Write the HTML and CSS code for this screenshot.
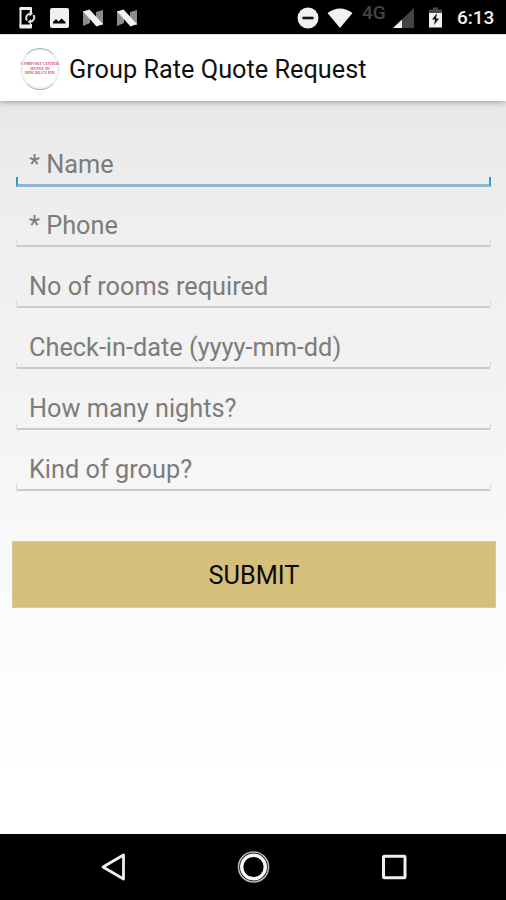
FILE: index.html
```html
<!DOCTYPE html>
<html lang="en">
<head>
<meta charset="UTF-8">
<meta name="viewport" content="width=device-width, initial-scale=1">
<title>Group Rate Quote Request</title>
<link rel="stylesheet" href="styles.css">
</head>
<body>

<div class="status">
	<div class="status_left">
		<!-- phone sync -->
		<svg width="18" height="24" viewBox="0 0 18 24">
			<path d="M13 7V3H2.500V20.500H13V18" fill="none" stroke="#f0f0f0" stroke-width="2" stroke-linejoin="round"/>
			<path d="M2.500 1H13Q14 1 14 2V4H1.500V2Q1.500 1 2.500 1ZM1.500 18.500H14V21.500Q14 22.500 13 22.500H2.500Q1.500 22.500 1.500 21.500Z" fill="#f0f0f0"/>
			<path d="M9 14.500A4.300 4.300 0 0 1 12 7.700M15.500 9A4.300 4.300 0 0 1 12.500 15.700" fill="none" stroke="#dcdcdc" stroke-width="2"/>
			<path d="M11.500 5V10.500L15 7.700ZM13 13V18.500L9.500 15.700Z" fill="#dcdcdc"/>
		</svg>
		<!-- picture -->
		<svg width="19" height="20" viewBox="0 0 19 20">
			<rect width="19" height="20" rx="2" fill="#f0f0f0"/>
			<path d="M3 15.500V14L6 11L8.500 13.500L11.500 10.500L15.500 14V15.500Z" fill="#000"/>
		</svg>
		<svg class="nougat" width="22" height="18" viewBox="0 0 22 18">
			<path d="M1 2H8V14L1 17ZM14 3L21 1V16H14Z" fill="#8c8c8c"/>
			<path d="M1 2.500L7.500 0.500L21 15L14.500 17.500Z" fill="#f2f2f2"/>
		</svg>
		<svg class="nougat" width="22" height="18" viewBox="0 0 22 18">
			<path d="M1 2H8V14L1 17ZM14 3L21 1V16H14Z" fill="#8c8c8c"/>
			<path d="M1 2.500L7.500 0.500L21 15L14.500 17.500Z" fill="#f2f2f2"/>
		</svg>
	</div>
	<div class="status_right">
		<svg width="22" height="22" viewBox="0 0 22 22">
			<circle cx="11" cy="11" r="10.500" fill="#f0f0f0"/>
			<rect x="5.500" y="9.700" width="11" height="2.600" fill="#111"/>
		</svg>
		<svg class="wifi" width="26" height="20" viewBox="0 0 26 20">
			<path d="M0.500 5Q13 -4 25.500 5L13 20Z" fill="#f2f2f2"/>
		</svg>
		<span class="net">4G</span>
		<svg class="signal" width="21" height="20" viewBox="0 0 21 20">
			<path d="M0 20L21 0V20Z" fill="#444"/>
			<path d="M0 20L9 11.500V20Z" fill="#f2f2f2"/>
		</svg>
		<svg class="battery" width="15" height="21" viewBox="0 0 15 21">
			<path d="M5 0.500H10V2.500H14V6H1V2.500H5Z" fill="#4a4a4a"/>
			<path d="M1 6H14V20.500H1Z" fill="#f0f0f0"/>
			<path d="M9 6L4 12.500H7L6 18L11 11.500H8Z" fill="#111"/>
		</svg>
		<span class="clock">6:13</span>
	</div>
</div>

<div class="title_bar">
	<div class="logo">
		<span>COMFORT CENTER</span>
		<span>HOTEL IN</span>
		<span>HINCKLEY INN</span>
	</div>
	<h1>Group Rate Quote Request</h1>
</div>

<form class="quote">
	<label class="field focus"><input type="text" placeholder="* Name"></label>
	<label class="field"><input type="text" placeholder="* Phone"></label>
	<label class="field"><input type="text" placeholder="No of rooms required"></label>
	<label class="field"><input type="text" placeholder="Check-in-date (yyyy-mm-dd)"></label>
	<label class="field"><input type="text" placeholder="How many nights?"></label>
	<label class="field"><input type="text" placeholder="Kind of group?"></label>
	<button type="button" class="submit">SUBMIT</button>
</form>

<div class="nav">
	<svg width="34" height="34" viewBox="0 0 34 34">
		<path d="M27.500 5V29L7 17Z" fill="none" stroke="#f0f0f0" stroke-width="2.800" stroke-linejoin="round"/>
	</svg>
	<svg width="34" height="34" viewBox="0 0 34 34">
		<circle cx="16.500" cy="17" r="15" fill="none" stroke="#b5b5b5" stroke-width="1.600"/>
		<circle cx="16.500" cy="17" r="11.800" fill="none" stroke="#f5f5f5" stroke-width="3.400"/>
	</svg>
	<svg width="34" height="34" viewBox="0 0 34 34">
		<rect x="6.500" y="6.300" width="21.500" height="21.500" rx="1" fill="none" stroke="#f0f0f0" stroke-width="3"/>
	</svg>
</div>

</body>
</html>
```
FILE: styles.css
```css
* {
	box-sizing: border-box;
	margin: 0;
	padding: 0;
}
body {
	display: flex;
	flex-direction: column;
	width: 506px;
	height: 900px;
	font-family: Roboto, sans-serif;
	background: #fff;
	overflow: hidden;
}
svg {
	display: block;
	flex: none;
}

/* status bar */
.status {
	display: flex;
	justify-content: space-between;
	height: 34px;
	padding: 0 10px 0 18px;
	background: #000;
}
.status_left,
.status_right {
	display: flex;
	align-items: center;
	height: 35px;
}
.status_left {
	gap: 13px;
}
.status_left svg:first-child {
	margin-right: 1px;
}
.status_left .nougat + .nougat {
	margin-left: -1px;
}
.wifi {
	margin-left: 8px;
}
.net {
	width: 26px;
	margin: -9px 0 0 9px;
	color: #444;
	font-size: 19px;
	font-weight: 500;
	line-height: 20px;
}
.signal {
	margin-left: 5px;
}
.battery {
	margin-left: 14px;
}
.clock {
	width: 39px;
	margin: 1px 0 0 14px;
	color: #f2f2f2;
	font-size: 19px;
	font-weight: 500;
	line-height: 20px;
	white-space: nowrap;
}

/* title */
.title_bar {
	display: flex;
	align-items: center;
	height: 67px;
	padding: 2px 0 0 20px;
	background: #fff;
	border-top: 1px solid #ddd;
	box-shadow: 0 1px 6px rgba(0, 0, 0, .35);
	z-index: 1;
}
.logo {
	display: flex;
	flex-direction: column;
	align-items: center;
	justify-content: center;
	width: 40px;
	height: 42px;
	border: 1px solid #b5b5b5;
	border-left-color: #eee;
	border-right-color: #eee;
	border-radius: 50%;
	box-shadow: inset 0 0 3px #ccc;
	color: #e0405c;
	font-family: "Liberation Serif", serif;
	font-size: 4px;
	font-weight: bold;
	line-height: 4.5px;
	white-space: nowrap;
}
.title_bar h1 {
	margin: 1px 0 0 9px;
	color: #111;
	font-size: 25.3px;
	font-weight: 400;
	line-height: 31px;
	white-space: nowrap;
}

/* form */
.quote {
	flex: 1;
	padding: 25px 10px 0 12px;
	background: linear-gradient(#e8e8e8, #eee 14%, #f3f3f3 40%, #f8f8f8 58%, #fcfcfc 75%, #fff 92%);
}
.field {
	display: block;
	height: 61px;
	margin: 0 5px 0 4px;
	padding-top: 22px;
}
.field input {
	display: block;
	width: 100%;
	height: 32px;
	padding: 0 13px;
	border: 0;
	outline: 0;
	background: transparent;
	font-family: Roboto, sans-serif;
	font-size: 25.3px;
}
.field input::placeholder {
	color: #7c7c7c;
	opacity: 1;
}
.field::after {
	content: "";
	display: block;
	height: 5px;
	margin-top: -1px;
	border: 1px solid #dadada;
	border-top: 0;
	border-bottom: 2px solid #cbcbcb;
	border-radius: 0 0 2px 2px;
}
.field.focus::after {
	height: 7px;
	margin-top: -3px;
	border: 2px solid #3399c8;
	border-top: 0;
	border-bottom: 3px solid #8fb7d4;
	border-radius: 0;
}
.submit {
	display: block;
	width: 484px;
	height: 67px;
	margin-top: 49px;
	padding-top: 2px;
	border: 1px solid #dccb91;
	background: #d5bf7a;
	color: #0c0a05;
	font-family: Roboto, sans-serif;
	font-size: 25.3px;
}

/* navigation bar */
.nav {
	display: flex;
	justify-content: space-between;
	align-items: center;
	height: 66px;
	padding: 0 95px 0 96px;
	background: #000;
}
```
